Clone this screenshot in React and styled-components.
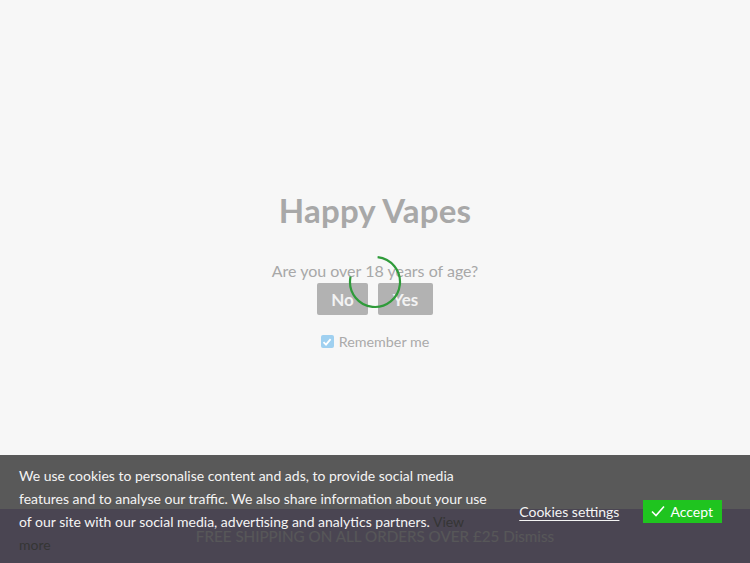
import React from 'react';
import styled, { createGlobalStyle, keyframes } from 'styled-components';

const GlobalStyle = createGlobalStyle`
  html, body {
    margin: 0;
    padding: 0;
    height: 100%;
    background: #f7f7f7;
    font-family: Lato, "Noto Sans", Arial, sans-serif;
  }
  #root {
    height: 100%;
  }
`;

const Page = styled.div`
  position: relative;
  height: 563px;
  overflow: hidden;
  background: #f7f7f7;
`;

const AgeGate = styled.div`
  height: 100%;
  display: flex;
  flex-direction: column;
  align-items: center;
  padding-top: 190px;
  box-sizing: border-box;
  color: #a8a8a8;
`;

const Title = styled.h1`
  margin: 0;
  font-size: 33px;
  font-weight: 700;
  letter-spacing: 0.2px;
  line-height: 40px;
`;

const Question = styled.p`
  margin: 31px 0 0;
  font-size: 16px;
  line-height: 20px;
`;

const ButtonRow = styled.div`
  position: relative;
  display: flex;
  gap: 10px;
  margin-top: 2px;
`;

const GateButton = styled.button`
  width: ${({ $w }) => $w}px;
  height: 32px;
  border: 0;
  border-radius: 2px;
  background: #b2b2b2;
  color: #f3f3f3;
  font-family: inherit;
  font-size: 17px;
  font-weight: 700;
  padding: 0;
`;

const Remember = styled.label`
  display: flex;
  align-items: center;
  gap: 5px;
  margin-top: 18px;
  font-size: 14.3px;
  color: #aaaaaa;
`;

const Box = styled.span`
  width: 13px;
  height: 13px;
  border-radius: 2px;
  background: #9fd0f0;
  display: flex;
  align-items: center;
  justify-content: center;
`;

const spin = keyframes`
  from { transform: rotate(0deg); }
  to { transform: rotate(360deg); }
`;

const Spinner = styled.svg`
  position: absolute;
  left: 50%;
  top: -28px;
  margin-left: -27px;
  width: 54px;
  height: 54px;
  animation: ${spin} 100s linear infinite;
  animation-play-state: paused;
`;

const Notice = styled.div`
  position: absolute;
  left: 0;
  right: 0;
  bottom: 0;
  height: 54px;
  background: #cdc0e4;
  color: #f2f0f5;
  display: flex;
  align-items: center;
  justify-content: center;
  font-size: 15.2px;
  padding-bottom: 1px;
  box-sizing: border-box;
`;

const CookieBar = styled.div`
  position: absolute;
  left: 0;
  right: 0;
  bottom: 0;
  height: 108px;
  background: rgba(0, 0, 0, 0.64);
  display: flex;
  align-items: center;
  padding: 0 28px 0 19px;
  box-sizing: border-box;
`;

const CookieText = styled.p`
  margin: 0;
  width: 468px;
  font-size: 14px;
  line-height: 23px;
  color: #f4f4f4;
  align-self: flex-start;
  padding-top: 9px;
`;

const ViewMore = styled.a`
  color: #353535;
  text-decoration: none;
`;

const Actions = styled.div`
  margin-left: auto;
  display: flex;
  align-items: center;
  gap: 24px;
  margin-top: 4px;
`;

const SettingsLink = styled.a`
  color: #f4f4f4;
  font-size: 14px;
  text-decoration: underline;
  text-underline-offset: 3px;
`;

const AcceptButton = styled.button`
  display: flex;
  align-items: center;
  gap: 5px;
  height: 23px;
  padding: 0 9px 0 8px;
  border: 0;
  background: #1fc41f;
  color: #ffffff;
  font-family: inherit;
  font-size: 14px;
`;

export default function App() {
  return (
    <>
      <GlobalStyle />
      <Page>
        <AgeGate>
          <Title>Happy Vapes</Title>
          <Question>Are you over 18 years of age?</Question>
          <ButtonRow>
            <GateButton $w={51}>No</GateButton>
            <GateButton $w={55}>Yes</GateButton>
            <Spinner viewBox="0 0 54 54">
              <circle
                cx="27"
                cy="27"
                r="25"
                fill="none"
                stroke="#2f9b3a"
                strokeWidth="2.2"
                strokeDasharray="120 37"
                transform="rotate(-84 27 27)"
              />
            </Spinner>
          </ButtonRow>
          <Remember>
            <Box>
              <svg width="10" height="10" viewBox="0 0 10 10">
                <path d="M1.5 5.2 L4 7.6 L8.6 2.2" fill="none" stroke="#ffffff" strokeWidth="1.8" />
              </svg>
            </Box>
            Remember me
          </Remember>
        </AgeGate>

        <Notice>FREE SHIPPING ON ALL ORDERS OVER £25 Dismiss</Notice>

        <CookieBar>
          <CookieText>
            We use cookies to personalise content and ads, to provide social media features and to
            analyse our traffic. We also share information about your use of our site with our social
            media, advertising and analytics partners. <ViewMore href="#">View more</ViewMore>
          </CookieText>
          <Actions>
            <SettingsLink href="#">Cookies settings</SettingsLink>
            <AcceptButton>
              <svg width="14" height="14" viewBox="0 0 14 14">
                <path d="M1 7.5 L5 11.5 L13 2.5" fill="none" stroke="#ffffff" strokeWidth="1.6" />
              </svg>
              Accept
            </AcceptButton>
          </Actions>
        </CookieBar>
      </Page>
    </>
  );
}
